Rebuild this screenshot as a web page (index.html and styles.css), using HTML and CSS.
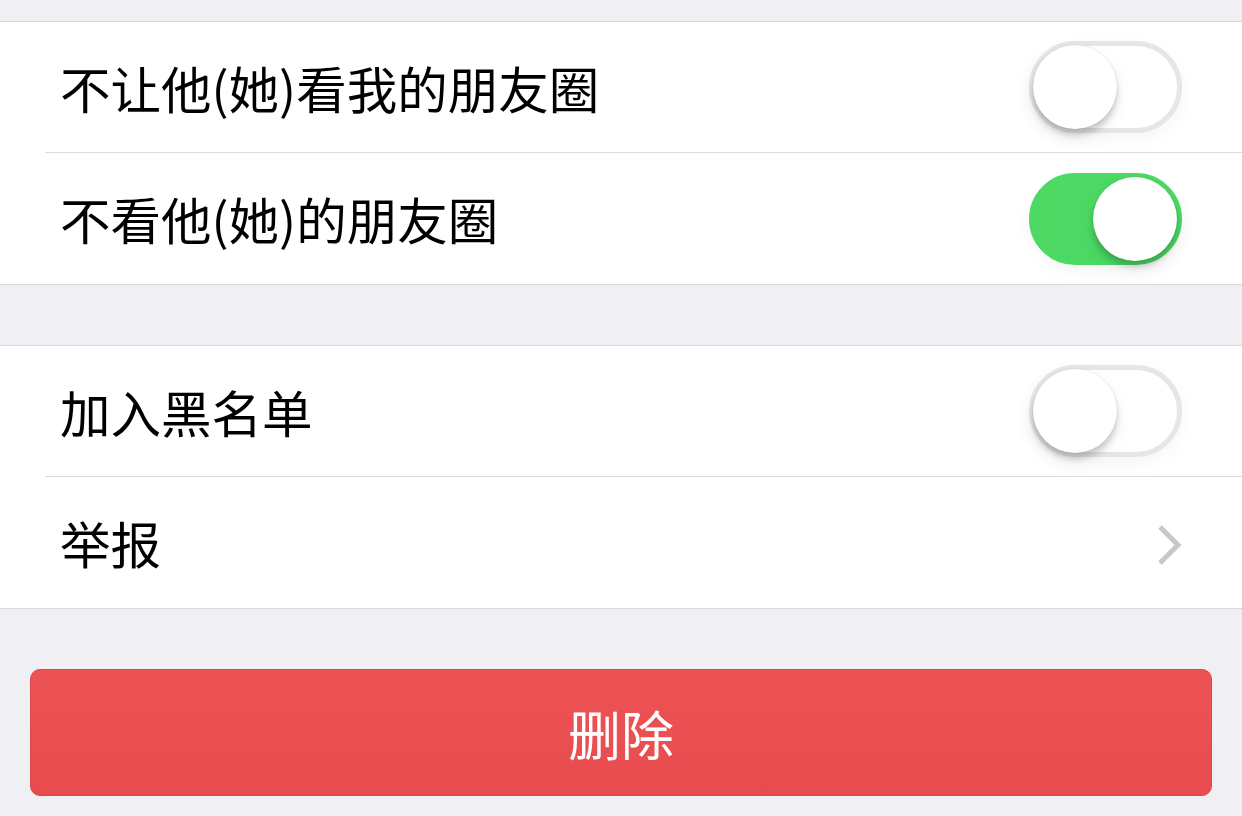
FILE: index.html
```html
<!DOCTYPE html>
<html lang="zh-CN">
<head>
    <meta charset="UTF-8">
    <meta name="viewport" content="width=device-width, initial-scale=1.0">
    <title>资料设置</title>
    <link rel="stylesheet" href="styles.css">
</head>
<body>
    <div class="group">
        <div class="row">
            <span class="label">不让他(她)看我的朋友圈</span>
            <div class="switch"><div class="knob"></div></div>
        </div>
        <div class="row">
            <span class="label">不看他(她)的朋友圈</span>
            <div class="switch on"><div class="knob"></div></div>
        </div>
    </div>

    <div class="group">
        <div class="row">
            <span class="label">加入黑名单</span>
            <div class="switch"><div class="knob"></div></div>
        </div>
        <div class="row">
            <span class="label">举报</span>
            <svg class="chevron" width="26" height="42" viewBox="0 0 26 42">
                <polyline points="3,3 21,21 3,39" fill="none" stroke="#c7c7cc" stroke-width="5"/>
            </svg>
        </div>
    </div>

    <div class="actions">
        <button class="delete-btn">删除</button>
    </div>
</body>
</html>
```

FILE: styles.css
```css
body {
    margin: 0;
    padding-top: 21px;
    background-color: #efeff4;
    font-family: "Noto Sans CJK SC", "Noto Sans", sans-serif;
    color: #000;
}
.group {
    background-color: #fff;
    border-top: 1px solid #d8d8dc;
    border-bottom: 1px solid #d8d8dc;
    margin-bottom: 60px;
}
.row {
    height: 130px;
    margin-left: 45px;
    padding: 0 60px 0 15px;
    display: flex;
    align-items: center;
    justify-content: space-between;
    border-bottom: 1px solid #dcdce0;
}
.row:last-child {
    height: 131px;
    border-bottom: none;
}
.label {
    font-size: 50.5px;
    line-height: 1;
}
.switch {
    position: relative;
    width: 153px;
    height: 92px;
    box-sizing: border-box;
    border-radius: 46px;
    border: 5px solid #e6e6e6;
    background-color: #fff;
    box-shadow: 0 6px 18px rgba(0, 0, 0, 0.04);
}
.switch .knob {
    position: absolute;
    top: -1px;
    left: -1px;
    width: 84px;
    height: 84px;
    border-radius: 50%;
    background-color: #fff;
    box-shadow: 0 6px 6px rgba(0, 0, 0, 0.18), 0 0 2px rgba(0, 0, 0, 0.12), 0 8px 20px rgba(0, 0, 0, 0.06);
}
.switch.on {
    border-color: #4cd964;
    background: linear-gradient(90deg, #4fda66, #48d560);
}
.switch.on .knob {
    left: 59px;
}
.chevron {
    margin-right: -1px;
    margin-top: 4px;
}
.actions {
    padding: 0 30px;
}
.delete-btn {
    display: block;
    width: 100%;
    height: 127px;
    border: 1px solid #d5484b;
    border-radius: 10px;
    background: linear-gradient(180deg, #ed5254, #e84c4e);
    color: #fff;
    font-family: "Noto Sans CJK SC", "Noto Sans", sans-serif;
    font-size: 53px;
}
```
